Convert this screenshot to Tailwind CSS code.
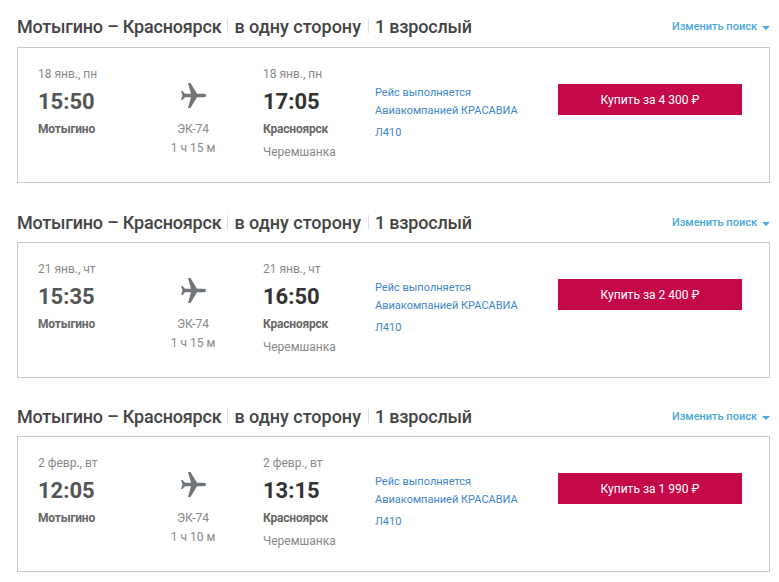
<!DOCTYPE html>
<html>
<head>
<meta charset="UTF-8">
<title>Мотыгино – Красноярск</title>
<script src="https://cdn.jsdelivr.net/npm/@tailwindcss/browser@4"></script>
</head>
<body class="bg-white font-['Roboto',sans-serif] overflow-hidden">
<div class="pl-[17px] pr-[9px] pt-[14px]">

  <!-- 18 jan -->
  <section class="h-[195px]">
    <div class="flex items-center justify-between h-[26px] mb-[7px]">
      <h2 class="flex items-center -mt-[2px] text-[18px] font-medium text-[#444]"><span class="tracking-[-0.2px]">Мотыгино – Красноярск</span><span class="mx-[6px] h-[14px] border-l border-[#ddd]"></span>в одну сторону<span class="ml-[7px] mr-[6px] h-[14px] border-l border-[#ddd]"></span><span class="tracking-[-0.2px]">1 взрослый</span></h2>
      <a class="flex items-center text-[11px] font-medium text-[#4aa8d8]">Изменить поиск<span class="ml-[5px] mt-[2px] border-x-[4px] border-x-transparent border-t-[4px] border-t-[#4aa8d8]"></span></a>
    </div>
    <div class="flex h-[136px] border border-[#c8c8c8] pl-[20px] pt-[19px]">
      <div class="w-[105px]">
        <p class="text-[12px] leading-[15px] text-[#888]">18 янв., пн</p>
        <p class="text-[22px] leading-[24px] mt-[8px] font-bold text-[#555]">15:50</p>
        <p class="text-[12px] leading-[15px] mt-[8px] font-bold text-[#666] tracking-[-0.2px]">Мотыгино</p>
      </div>
      <div class="w-[100px] flex flex-col items-center">
        <svg class="mt-[16px] w-[26px] h-[26px]" viewBox="0 0 26 26"><path fill="#70757a" d="M26 12.500C26 11.500 25 10.800 24 10.800H17L10.500 0H8L11 10.800H5L2.500 8H1L2.500 12.500 1 17H2.500L5 14.200H11L8 25H10.500L17 14.200H24C25 14.200 26 13.500 26 12.500Z"/></svg>
        <p class="text-[12px] leading-[15px] mt-[13px] text-[#888]">ЭК-74</p>
        <p class="text-[12px] leading-[15px] mt-[4px] text-[#888]">1 ч 15 м</p>
      </div>
      <div class="w-[112px] ml-[20px]">
        <p class="text-[12px] leading-[15px] text-[#888]">18 янв., пн</p>
        <p class="text-[22px] leading-[24px] mt-[8px] font-bold text-[#333]">17:05</p>
        <p class="text-[12px] leading-[15px] mt-[8px] font-bold text-[#666] tracking-[-0.2px]">Красноярск</p>
        <p class="text-[12px] leading-[15px] mt-[8px] text-[#888]">Черемшанка</p>
      </div>
      <div class="w-[183px] pt-[17px] text-[11px] leading-[18px] text-[#3f86c8]">
        <p>Рейс выполняется</p>
        <p>Авиакомпанией КРАСАВИА</p>
        <p class="mt-[4px]">Л410</p>
      </div>
      <a class="mt-[17px] w-[184px] h-[31px] flex items-center justify-center bg-[#c4084a] text-white text-[12px]">Купить за 4 300 ₽</a>
    </div>
  </section>

  <!-- 21 jan -->
  <section class="h-[194px]">
    <div class="flex items-center justify-between h-[26px] pt-[2px] mb-[7px]">
      <h2 class="flex items-center -mt-[2px] text-[18px] font-medium text-[#444]"><span class="tracking-[-0.2px]">Мотыгино – Красноярск</span><span class="mx-[6px] h-[14px] border-l border-[#ddd]"></span>в одну сторону<span class="ml-[7px] mr-[6px] h-[14px] border-l border-[#ddd]"></span><span class="tracking-[-0.2px]">1 взрослый</span></h2>
      <a class="flex items-center text-[11px] font-medium text-[#4aa8d8]">Изменить поиск<span class="ml-[5px] mt-[2px] border-x-[4px] border-x-transparent border-t-[4px] border-t-[#4aa8d8]"></span></a>
    </div>
    <div class="flex h-[136px] border border-[#c8c8c8] pl-[20px] pt-[19px]">
      <div class="w-[105px]">
        <p class="text-[12px] leading-[15px] text-[#888]">21 янв., чт</p>
        <p class="text-[22px] leading-[24px] mt-[8px] font-bold text-[#555]">15:35</p>
        <p class="text-[12px] leading-[15px] mt-[8px] font-bold text-[#666] tracking-[-0.2px]">Мотыгино</p>
      </div>
      <div class="w-[100px] flex flex-col items-center">
        <svg class="mt-[16px] w-[26px] h-[26px]" viewBox="0 0 26 26"><path fill="#70757a" d="M26 12.500C26 11.500 25 10.800 24 10.800H17L10.500 0H8L11 10.800H5L2.500 8H1L2.500 12.500 1 17H2.500L5 14.200H11L8 25H10.500L17 14.200H24C25 14.200 26 13.500 26 12.500Z"/></svg>
        <p class="text-[12px] leading-[15px] mt-[13px] text-[#888]">ЭК-74</p>
        <p class="text-[12px] leading-[15px] mt-[4px] text-[#888]">1 ч 15 м</p>
      </div>
      <div class="w-[112px] ml-[20px]">
        <p class="text-[12px] leading-[15px] text-[#888]">21 янв., чт</p>
        <p class="text-[22px] leading-[24px] mt-[8px] font-bold text-[#333]">16:50</p>
        <p class="text-[12px] leading-[15px] mt-[8px] font-bold text-[#666] tracking-[-0.2px]">Красноярск</p>
        <p class="text-[12px] leading-[15px] mt-[8px] text-[#888]">Черемшанка</p>
      </div>
      <div class="w-[183px] pt-[17px] text-[11px] leading-[18px] text-[#3f86c8]">
        <p>Рейс выполняется</p>
        <p>Авиакомпанией КРАСАВИА</p>
        <p class="mt-[4px]">Л410</p>
      </div>
      <a class="mt-[17px] w-[184px] h-[31px] flex items-center justify-center bg-[#c4084a] text-white text-[12px]">Купить за 2 400 ₽</a>
    </div>
  </section>

  <!-- 2 feb -->
  <section>
    <div class="flex items-center justify-between h-[26px] pt-[2px] mb-[7px]">
      <h2 class="flex items-center -mt-[2px] text-[18px] font-medium text-[#444]"><span class="tracking-[-0.2px]">Мотыгино – Красноярск</span><span class="mx-[6px] h-[14px] border-l border-[#ddd]"></span>в одну сторону<span class="ml-[7px] mr-[6px] h-[14px] border-l border-[#ddd]"></span><span class="tracking-[-0.2px]">1 взрослый</span></h2>
      <a class="flex items-center text-[11px] font-medium text-[#4aa8d8]">Изменить поиск<span class="ml-[5px] mt-[2px] border-x-[4px] border-x-transparent border-t-[4px] border-t-[#4aa8d8]"></span></a>
    </div>
    <div class="flex h-[136px] border border-[#c8c8c8] pl-[20px] pt-[19px]">
      <div class="w-[105px]">
        <p class="text-[12px] leading-[15px] text-[#888]">2 февр., вт</p>
        <p class="text-[22px] leading-[24px] mt-[8px] font-bold text-[#555]">12:05</p>
        <p class="text-[12px] leading-[15px] mt-[8px] font-bold text-[#666] tracking-[-0.2px]">Мотыгино</p>
      </div>
      <div class="w-[100px] flex flex-col items-center">
        <svg class="mt-[16px] w-[26px] h-[26px]" viewBox="0 0 26 26"><path fill="#70757a" d="M26 12.500C26 11.500 25 10.800 24 10.800H17L10.500 0H8L11 10.800H5L2.500 8H1L2.500 12.500 1 17H2.500L5 14.200H11L8 25H10.500L17 14.200H24C25 14.200 26 13.500 26 12.500Z"/></svg>
        <p class="text-[12px] leading-[15px] mt-[13px] text-[#888]">ЭК-74</p>
        <p class="text-[12px] leading-[15px] mt-[4px] text-[#888]">1 ч 10 м</p>
      </div>
      <div class="w-[112px] ml-[20px]">
        <p class="text-[12px] leading-[15px] text-[#888]">2 февр., вт</p>
        <p class="text-[22px] leading-[24px] mt-[8px] font-bold text-[#333]">13:15</p>
        <p class="text-[12px] leading-[15px] mt-[8px] font-bold text-[#666] tracking-[-0.2px]">Красноярск</p>
        <p class="text-[12px] leading-[15px] mt-[8px] text-[#888]">Черемшанка</p>
      </div>
      <div class="w-[183px] pt-[17px] text-[11px] leading-[18px] text-[#3f86c8]">
        <p>Рейс выполняется</p>
        <p>Авиакомпанией КРАСАВИА</p>
        <p class="mt-[4px]">Л410</p>
      </div>
      <a class="mt-[17px] w-[184px] h-[31px] flex items-center justify-center bg-[#c4084a] text-white text-[12px]">Купить за 1 990 ₽</a>
    </div>
  </section>

</div>
</body>
</html>
